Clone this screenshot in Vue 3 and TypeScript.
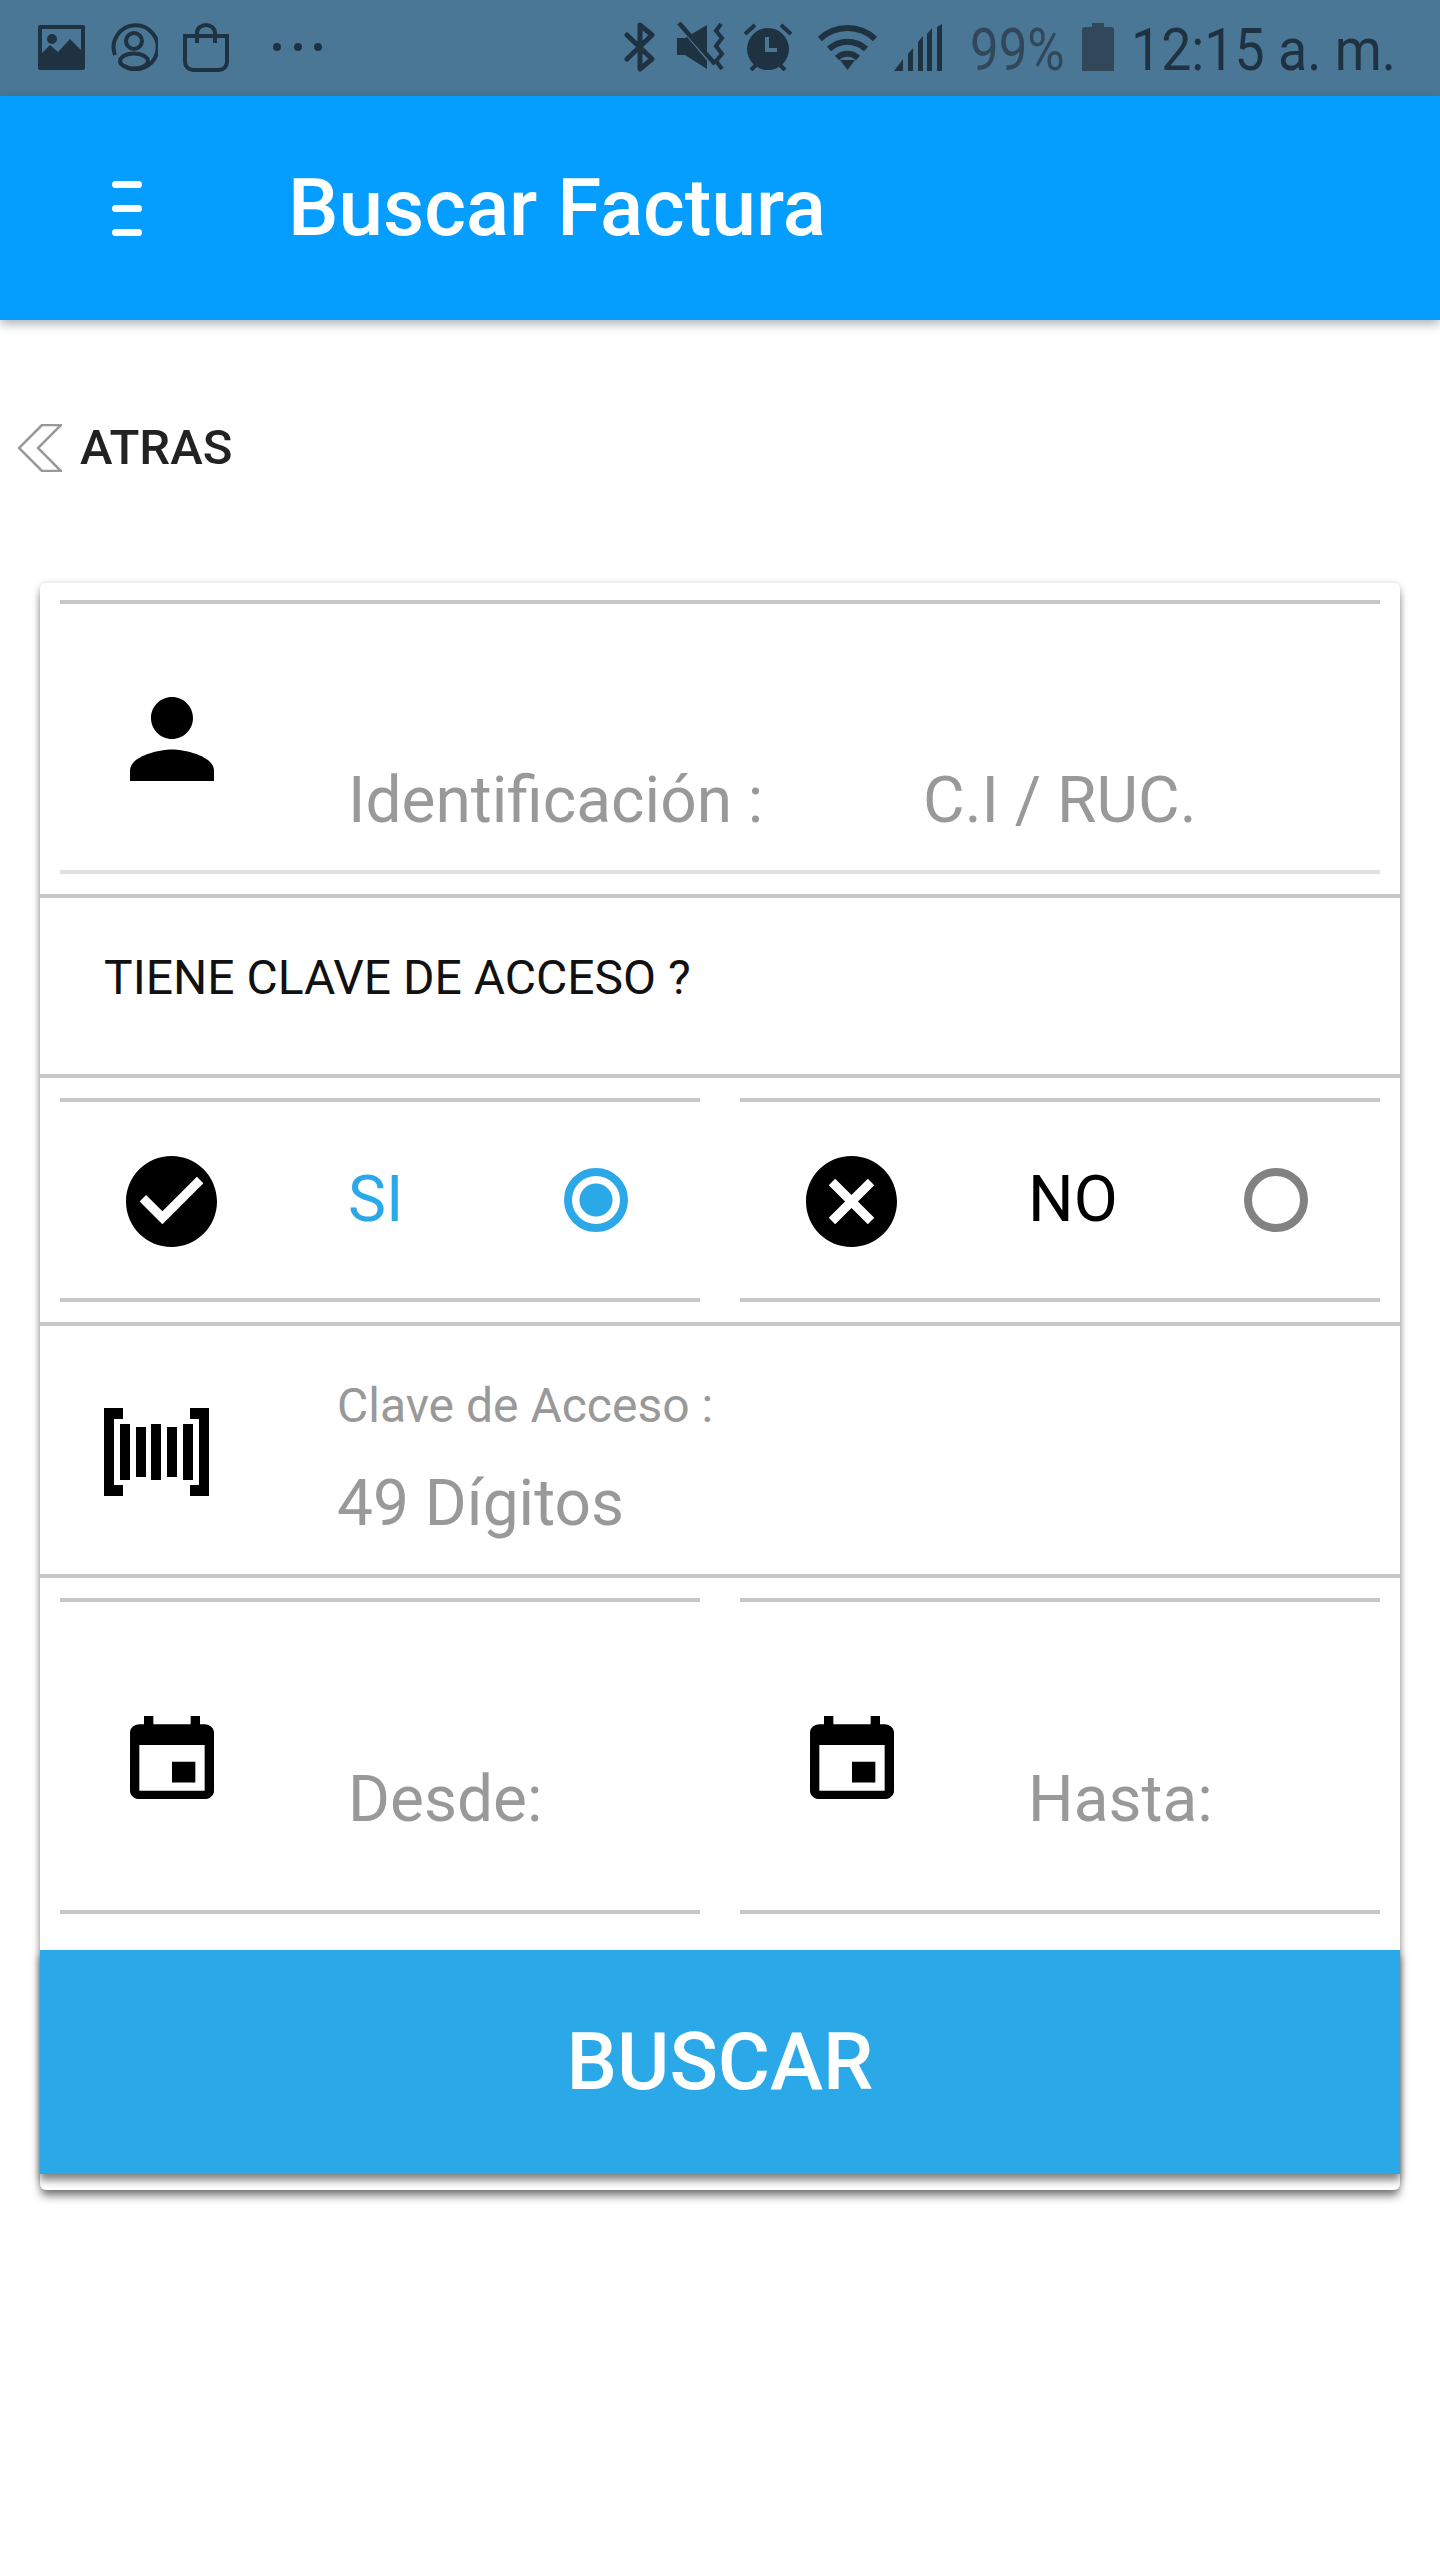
<script setup lang="ts">
import { ref } from 'vue'

const tieneClave = ref(true)
const bars = [
  { x: 16, y: 16, h: 56 },
  { x: 32, y: 19, h: 50 },
  { x: 47, y: 16, h: 56 },
  { x: 63, y: 19, h: 50 },
  { x: 79, y: 16, h: 56 },
]
</script>

<template>
  <div class="page">
    <div class="status">
      <svg class="st-img" viewBox="0 0 47 45"><path fill="#1f3242" fill-rule="evenodd" d="M2 0h43a2 2 0 0 1 2 2v41a2 2 0 0 1-2 2H2a2 2 0 0 1-2-2V2a2 2 0 0 1 2-2zm2 4v24l8-8 8 7 12-13 11 11V4z"/><circle cx="14" cy="14" r="5" fill="#1f3242"/></svg>
      <svg class="st-acc" viewBox="0 0 48 48" fill="none" stroke="#1f3242" stroke-width="4"><path d="M5 32A22 22 0 1 1 14 43"/><circle cx="24" cy="18" r="8"/><ellipse cx="24" cy="38" rx="14" ry="7.5"/></svg>
      <svg class="st-bag" viewBox="0 0 46 49" fill="none" stroke="#1f3242" stroke-width="4"><path d="M14 13H2v26a8 8 0 0 0 8 8h26a8 8 0 0 0 8-8V13H32"/><path d="M14 20V10a9 8 0 0 1 18 0v10M16 13h14"/></svg>
      <svg class="st-dots" viewBox="0 0 50 8" fill="#1f3242"><circle cx="4" cy="4" r="4"/><circle cx="25" cy="4" r="4"/><circle cx="45" cy="4" r="4"/></svg>

      <svg class="st-bt" viewBox="0 0 31 50" fill="none" stroke="#1f3242" stroke-width="5" stroke-linejoin="round" stroke-linecap="round"><path d="M3 13l25 24-12 10V3l12 10L3 37"/></svg>
      <svg class="st-mute" viewBox="0 0 50 50"><path fill="#1f3242" d="M0 16h8L30 3v44L8 33H0z"/><path stroke="#4a7795" stroke-width="3" d="M2 3l32 38"/><path stroke="#1f3242" stroke-width="4.5" d="M2 1l36 41"/><path fill="none" stroke="#1f3242" stroke-width="4" d="M44 2l-5 7 6 7-6 8 6 8-6 7 6 8"/></svg>
      <svg class="st-alarm" viewBox="0 0 48 48"><circle cx="24" cy="26" r="21" fill="#1f3242"/><path stroke="#1f3242" stroke-width="4" d="M1 11L11 2M47 11L37 2M7 47l5-5M41 47l-5-5"/><path fill="none" stroke="#4a7795" stroke-width="4" d="M23 14v13h10"/></svg>
      <svg class="st-wifi" viewBox="0 0 59 46" fill="none" stroke="#1f3242" stroke-width="6"><path d="M2 15a40 40 0 0 1 55 0"/><path d="M11 25a27 27 0 0 1 37 0"/><path d="M19 34a15 15 0 0 1 21 0"/><path d="M22 36h15l-7.500 10z" fill="#1f3242" stroke="none"/></svg>
      <svg class="st-signal" viewBox="0 0 48 47" fill="#1f3242"><path d="M0 47l9-12v12zM14 30l5-6v23h-5zM24 18l5-6v35h-5zM33 10l5-6v43h-5zM43 3l5-3v47h-5z"/></svg>
      <span class="st-pct">99%</span>
      <svg class="st-batt" viewBox="0 0 32 48" fill="#33475a"><path d="M10 0h12v4h7a3 3 0 0 1 3 3v41H0V7a3 3 0 0 1 3-3h7z"/></svg>
      <span class="st-time">12:15 a. m.</span>
    </div>

    <header class="topbar">
      <div class="menu"><i></i><i></i><i></i></div>
      <h1 class="title">Buscar Factura</h1>
    </header>

    <div class="back">
      <svg class="back-icon" viewBox="0 0 44 48" fill="none" stroke="#999" stroke-width="2.500"><path d="M43 1H24L1 24l23 23h19L20 24z"/></svg>
      <span>ATRAS</span>
    </div>

    <div class="card">
      <div class="box box-id">
        <svg class="ico-person" viewBox="4 4 16 16"><path d="M12 12c2.21 0 4-1.790 4-4s-1.790-4-4-4-4 1.790-4 4 1.790 4 4 4zm0 2c-2.670 0-8 1.340-8 4v2h16v-2c0-2.660-5.330-4-8-4z"/></svg>
        <span class="ph id-label">Identificación :</span>
        <span class="ph">C.I / RUC.</span>
      </div>

      <div class="question">TIENE CLAVE DE ACCESO ?</div>

      <div class="pair pair-opts">
        <div class="box opt" @click="tieneClave = true">
          <svg class="ico-opt" viewBox="2 2 20 20"><path d="M12 2C6.480 2 2 6.480 2 12s4.480 10 10 10 10-4.480 10-10S17.520 2 12 2zm-2 15l-5-5 1.410-1.410L10 14.170l7.590-7.590L19 8l-9 9z"/></svg>
          <span class="opt-label" :class="{ on: tieneClave }">SI</span>
          <span class="radio" :class="{ on: tieneClave }"></span>
        </div>
        <div class="box opt" @click="tieneClave = false">
          <svg class="ico-opt" viewBox="2 2 20 20"><path d="M12 2C6.470 2 2 6.470 2 12s4.470 10 10 10 10-4.470 10-10S17.530 2 12 2zm5 13.590L15.590 17 12 13.410 8.410 17 7 15.590 10.590 12 7 8.410 8.410 7 12 10.590 15.590 7 17 8.410 13.410 12 17 15.590z"/></svg>
          <span class="opt-label" :class="{ on: !tieneClave }">NO</span>
          <span class="radio" :class="{ on: !tieneClave }"></span>
        </div>
      </div>

      <div class="clave">
        <svg class="ico-bar" viewBox="0 0 105 88">
          <path d="M0 0h19v11H10v66h9v11H0zM105 0H86v11h9v66h-9v11h19z"/>
          <rect v-for="b in bars" :key="b.x" :x="b.x" :y="b.y" width="10" :height="b.h" />
        </svg>
        <div class="clave-text">
          <div class="clave-label">Clave de Acceso :</div>
          <div class="ph clave-ph">49 Dígitos</div>
        </div>
      </div>

      <div class="pair pair-dates">
        <div class="box date">
          <svg class="ico-cal" viewBox="3 1 18 20" preserveAspectRatio="none"><path d="M17 12h-5v5h5v-5zM16 1v2H8V1H6v2H5c-1.110 0-1.990.9-1.990 2L3 19c0 1.100.89 2 2 2h14c1.100 0 2-.9 2-2V5c0-1.100-.9-2-2-2h-1V1h-2zm3 18H5V8h14v11z"/></svg>
          <span class="ph">Desde:</span>
        </div>
        <div class="box date">
          <svg class="ico-cal" viewBox="3 1 18 20" preserveAspectRatio="none"><path d="M17 12h-5v5h5v-5zM16 1v2H8V1H6v2H5c-1.110 0-1.990.9-1.990 2L3 19c0 1.100.89 2 2 2h14c1.100 0 2-.9 2-2V5c0-1.100-.9-2-2-2h-1V1h-2zm3 18H5V8h14v11z"/></svg>
          <span class="ph">Hasta:</span>
        </div>
      </div>

      <button class="buscar">BUSCAR</button>
    </div>
  </div>
</template>

<style scoped>
.page {
  min-height: 2560px;
  background: #fff;
  font-family: Roboto, "Liberation Sans", sans-serif;
  overflow: hidden;
}

/* status bar */
.status {
  height: 96px;
  background: #4a7795;
  display: flex;
  align-items: center;
  padding-left: 38px;
}
.status svg { display: block; flex: none; }
.st-img { width: 47px; height: 45px; margin-top: -2px; }
.st-acc { width: 48px; height: 48px; margin-left: 25px; margin-top: -2px; }
.st-bag { width: 46px; height: 49px; margin-left: 25px; margin-top: -2px; }
.st-dots { width: 50px; height: 8px; margin-left: 44px; margin-top: -2px; }
.st-bt { width: 31px; height: 50px; margin-left: 301px; margin-top: -2px; }
.st-mute { width: 50px; height: 50px; margin-left: 22px; margin-top: -2px; }
.st-alarm { width: 48px; height: 48px; margin-left: 17px; margin-top: -2px; }
.st-wifi { width: 59px; height: 46px; margin-left: 26px; margin-top: -2px; }
.st-signal { width: 48px; height: 47px; margin-left: 17px; margin-top: -2px; }
.st-pct, .st-time {
  font-size: 60px;
  line-height: 60px;
  transform-origin: left center;
  white-space: nowrap;
  flex: none;
}
.st-pct {
  width: 94px;
  margin-left: 28px;
  color: #33475a;
  font-weight: 400;
  transform: scaleX(.85);
  margin-top: 3px;
}
.st-batt { width: 32px; height: 48px; margin-left: 18px; margin-top: -2px; }
.st-time {
  width: 261px;
  margin-left: 17px;
  color: #1f3242;
  font-weight: 400;
  transform: scaleX(.895);
  margin-top: 3px;
}

/* app bar */
.topbar {
  position: relative;
  height: 224px;
  background: #069efe;
  box-shadow: 0 4px 10px rgba(40, 50, 70, .38);
  display: flex;
  align-items: center;
  padding-left: 112px;
}
.menu {
  width: 30px;
  display: flex;
  flex-direction: column;
  gap: 17px;
}
.menu i {
  display: block;
  height: 7px;
  border-radius: 4px;
  background: #fff;
}
.title {
  margin: 0 0 0 146px;
  font-size: 80px;
  line-height: 80px;
  font-weight: 500;
  color: #fff;
  white-space: nowrap;
}

/* back link */
.back {
  height: 263px;
  box-sizing: border-box;
  display: flex;
  align-items: flex-start;
  padding: 104px 0 0 18px;
}
.back-icon { width: 44px; height: 48px; display: block; flex: none; }
.back span {
  margin-left: 18px;
  font-size: 49px;
  line-height: 48px;
  font-weight: 500;
  color: #222;
}

/* card */
.card {
  margin: 0 40px;
  padding-top: 17px;
  padding-bottom: 16px;
  background: #fff;
  border-radius: 6px;
  box-shadow: 0 7px 8px -1px rgba(0, 0, 0, .5), 0 0 6px rgba(0, 0, 0, .15);
}
.box {
  border-top: 4px solid #c8c8c8;
  border-bottom: 4px solid #c8c8c8;
  box-sizing: border-box;
  display: flex;
}
.ph {
  font-size: 64px;
  line-height: 64px;
  color: #999;
  white-space: nowrap;
}
.box-id {
  height: 274px;
  margin: 0 20px;
  border-bottom-color: #e0e0e0;
  align-items: flex-start;
  padding-left: 70px;
}
.ico-person {
  width: 84px;
  height: 84px;
  margin-top: 93px;
  flex: none;
}
.box-id .ph { margin-top: 165px; }
.id-label { width: 575px; margin-left: 134px; }

.question {
  height: 184px;
  margin-top: 20px;
  box-sizing: border-box;
  border-top: 4px solid #c8c8c8;
  border-bottom: 4px solid #c8c8c8;
  padding: 56px 0 0 64px;
  font-size: 48px;
  line-height: 48px;
  color: #111;
}

.pair {
  display: grid;
  grid-template-columns: 1fr 1fr;
  column-gap: 40px;
  padding: 20px 20px 0;
}
.pair-opts {
  padding-bottom: 20px;
  border-bottom: 4px solid #c8c8c8;
}
.opt {
  height: 204px;
  align-items: center;
  padding-left: 66px;
  cursor: pointer;
}
.ico-opt { width: 91px; height: 91px; flex: none; margin-top: 2px; }
.opt-label {
  width: 216px;
  margin-left: 131px;
  font-size: 64px;
  line-height: 64px;
  color: #000;
  flex: none;
}
.opt-label.on { color: #2ba8e8; }
.radio {
  width: 64px;
  height: 64px;
  box-sizing: border-box;
  border: 8px solid #828282;
  border-radius: 50%;
  flex: none;
}
.radio.on {
  border-color: #2ba8e8;
  background: radial-gradient(circle, #2ba8e8 0 16px, #fff 17px);
}

.clave {
  height: 252px;
  box-sizing: border-box;
  border-bottom: 4px solid #c8c8c8;
  display: flex;
  align-items: flex-start;
  padding-left: 64px;
}
.ico-bar {
  width: 105px;
  height: 88px;
  margin-top: 82px;
  flex: none;
}
.clave-text { margin-left: 128px; padding-top: 56px; }
.clave-label {
  font-size: 48px;
  line-height: 48px;
  color: #999;
  white-space: nowrap;
}
.clave-ph { margin-top: 42px; }

.date {
  height: 316px;
  align-items: flex-start;
  padding-left: 70px;
}
.ico-cal {
  width: 84px;
  height: 83px;
  margin-top: 114px;
  flex: none;
}
.date .ph {
  margin-top: 166px;
  margin-left: 134px;
}

.buscar {
  display: block;
  width: 100%;
  height: 224px;
  margin-top: 36px;
  padding: 0;
  border: 0;
  background: #2ba8e8;
  color: #fff;
  font-family: inherit;
  font-size: 80px;
  font-weight: 500;
  box-shadow: 0 6px 8px rgba(0, 0, 0, .5);
  cursor: pointer;
}
</style>
